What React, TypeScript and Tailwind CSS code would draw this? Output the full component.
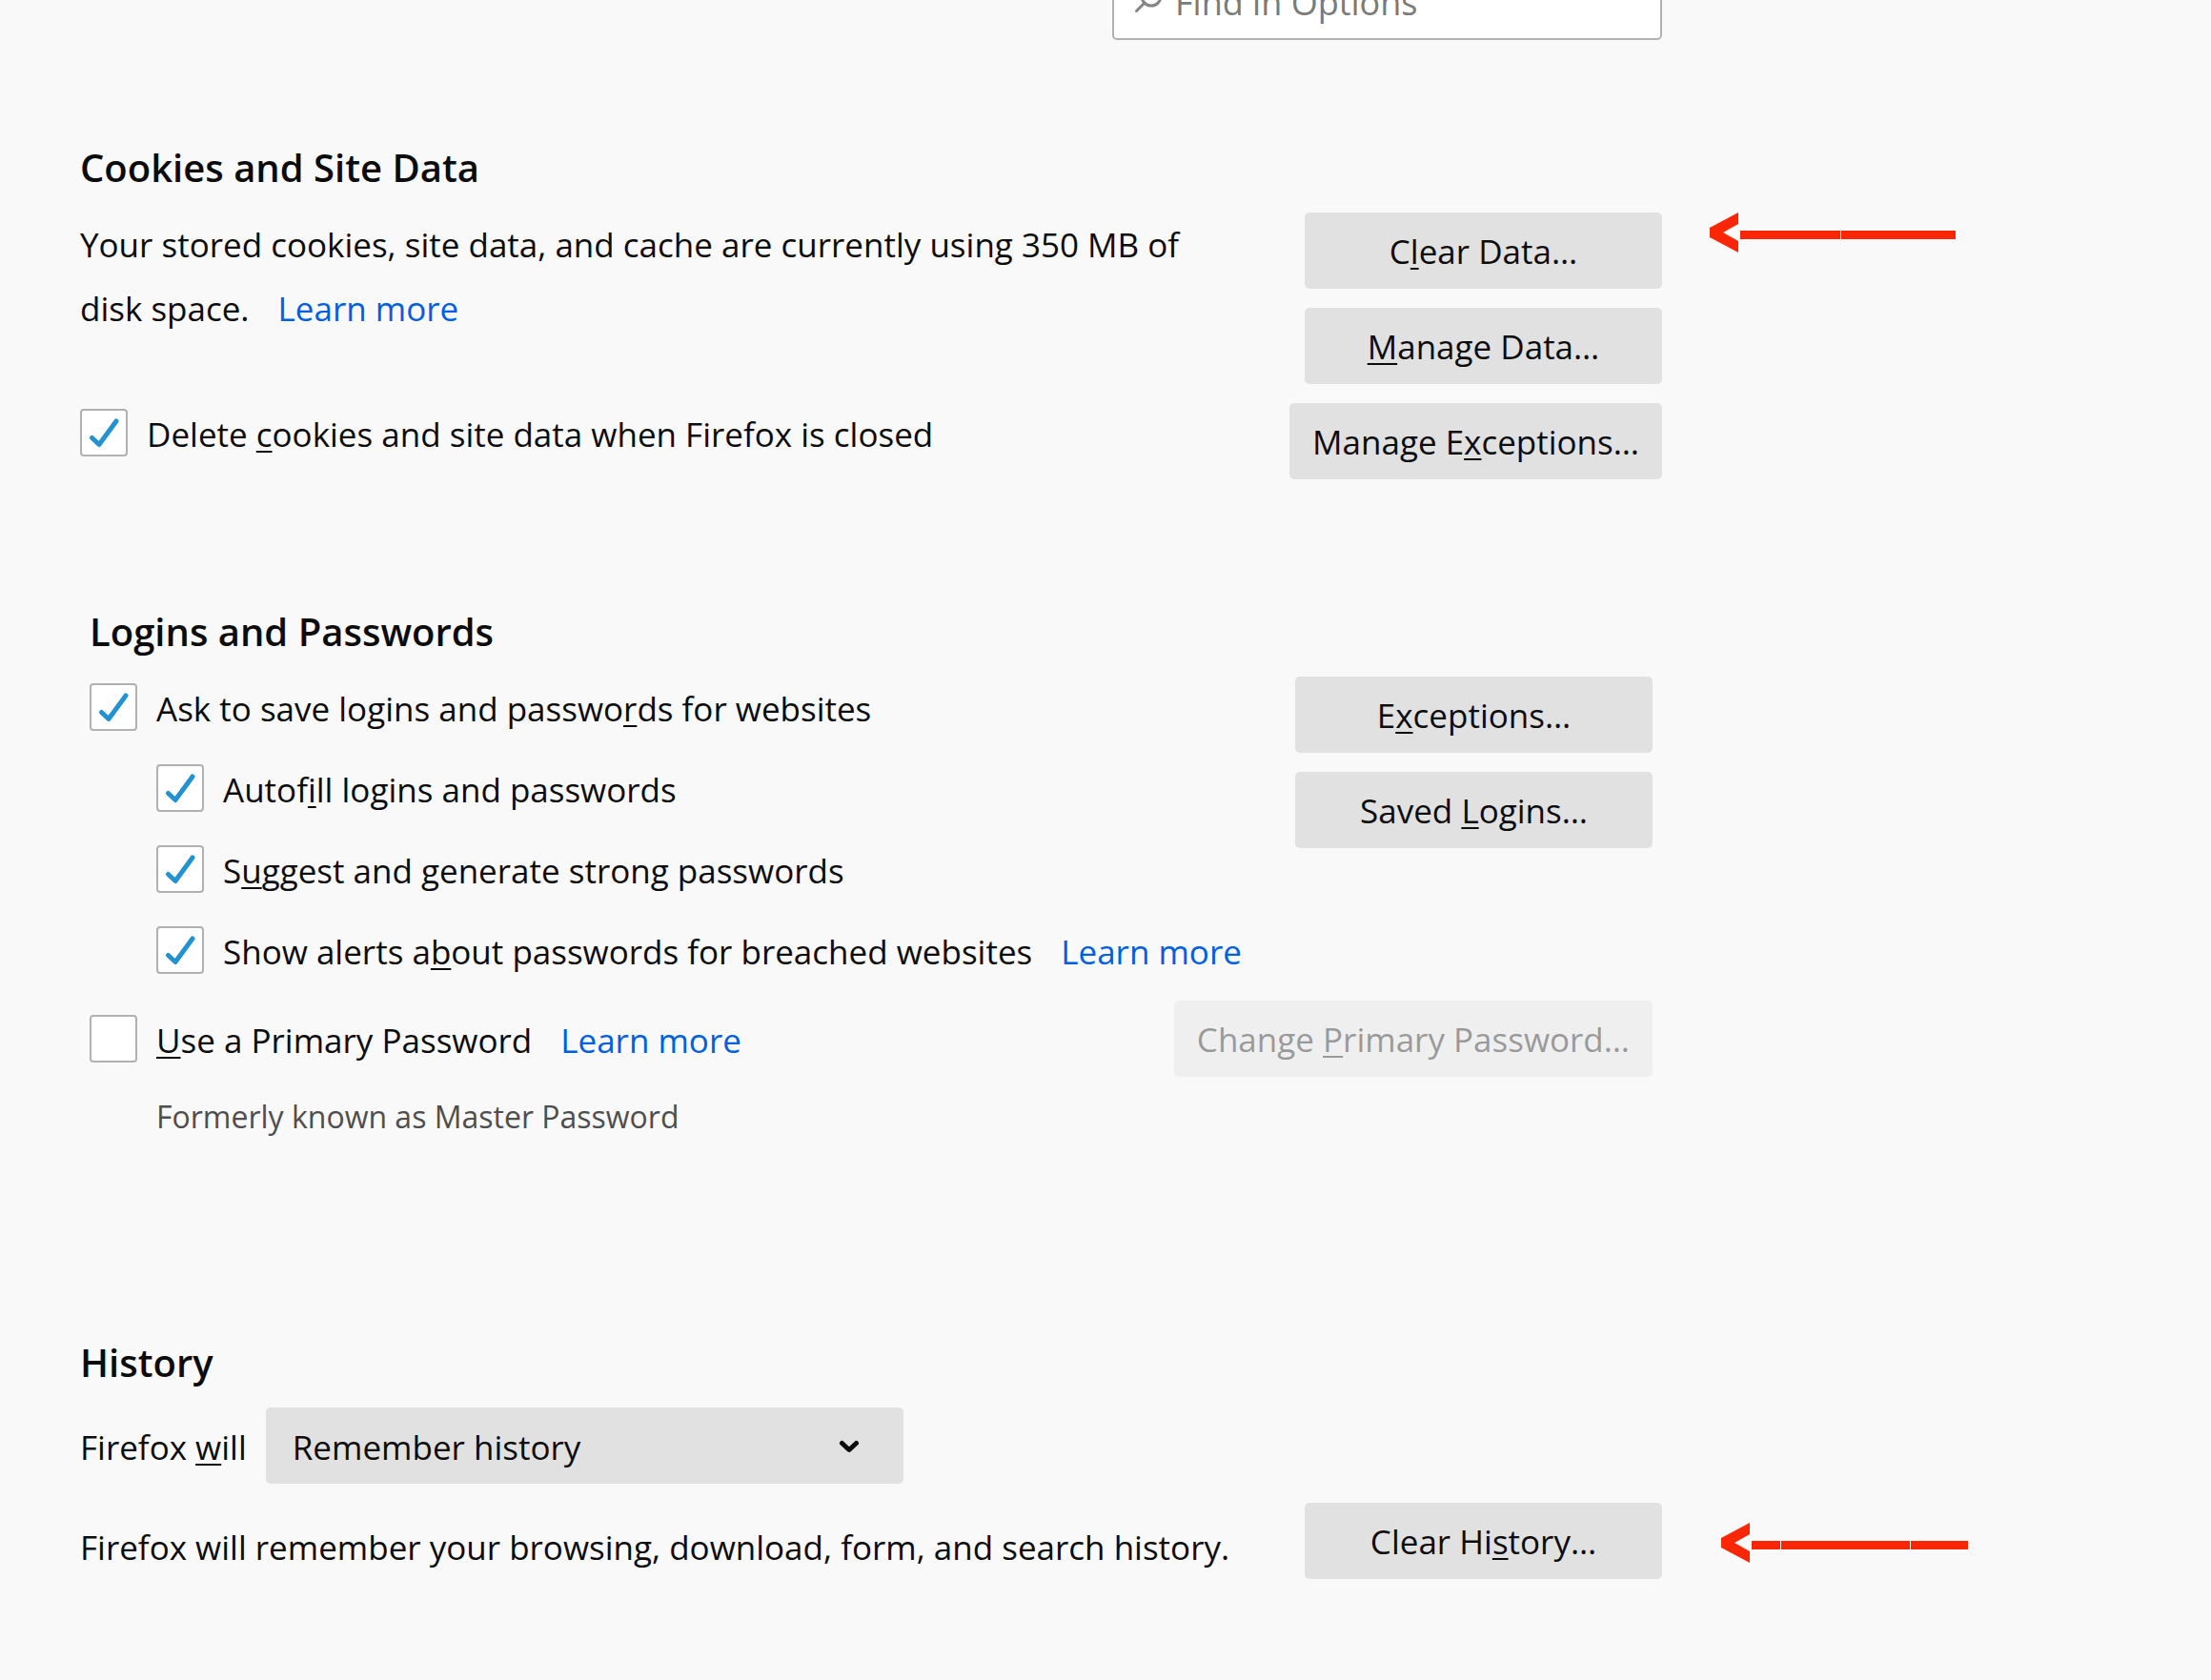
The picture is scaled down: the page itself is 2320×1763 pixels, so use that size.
import { useState, type ReactNode } from "react";
import clsx from "clsx";

interface CheckRowProps {
  id: string;
  defaultChecked?: boolean;
  children: ReactNode;
  learnMore?: boolean;
}

interface PrefButtonProps {
  children: ReactNode;
  disabled?: boolean;
}

// Underlined access key inside a label
function Key({ children }: { children: ReactNode }) {
  return <span className="underline decoration-2 underline-offset-4">{children}</span>;
}

function LearnMore() {
  return (
    <a href="#learn-more" className="ml-[30px] text-[#0060df]">
      Learn more
    </a>
  );
}

function CheckRow({ id, defaultChecked = false, children, learnMore }: CheckRowProps) {
  const [checked, setChecked] = useState(defaultChecked);

  return (
    <div className="flex items-center">
      <span className="relative mr-5 h-[50px] w-[50px] shrink-0">
        <input
          id={id}
          type="checkbox"
          checked={checked}
          onChange={(e) => setChecked(e.target.checked)}
          className="block h-full w-full appearance-none rounded-[4px] border-2 border-[#b1b1b1] bg-white"
        />
        {checked && (
          <svg viewBox="0 0 50 50" className="pointer-events-none absolute inset-0" aria-hidden="true">
            <path
              d="M12.5 30.5 L20 37.5 L38 13"
              fill="none"
              stroke="#2292d0"
              strokeWidth="5"
              strokeLinecap="round"
              strokeLinejoin="round"
            />
          </svg>
        )}
      </span>
      <div className="pt-1 leading-[46px]">
        <label htmlFor={id}>{children}</label>
        {learnMore && <LearnMore />}
      </div>
    </div>
  );
}

function PrefButton({ children, disabled }: PrefButtonProps) {
  return (
    <button
      type="button"
      disabled={disabled}
      className={clsx(
        "h-20 min-w-[375px] shrink-0 rounded-[5px] bg-[#e1e1e1] px-6 pt-0.5 whitespace-nowrap",
        disabled && "opacity-40"
      )}
    >
      {children}
    </button>
  );
}

function Heading({ children }: { children: ReactNode }) {
  return <h2 className="mb-[18px] text-[40px] leading-[58px] font-semibold">{children}</h2>;
}

// Hand-drawn style pointer, the shaft is made of dashes that nearly touch
function Arrow({ dashes }: { dashes: number[][] }) {
  return (
    <svg width="260" height="42" viewBox="0 0 260 42" fill="#fb2606" aria-hidden="true">
      <path d="M30 0 V12 L14 21 L30 30 V42 L0 26 V16 Z" />
      {dashes.map(([x, width]) => (
        <rect key={x} x={x} y="19" width={width} height="9" />
      ))}
    </svg>
  );
}

export default function App() {
  return (
    <main className="min-h-screen overflow-hidden bg-[#f9f9f9] px-[84px] pb-[106px] font-['Open_Sans','Noto_Sans',sans-serif] text-[35px] text-[#0c0c0d] [font-variant-ligatures:none]">
      <div className="w-full max-w-[1660px]">
        <header className="-mt-[38px] flex justify-end">
          <div className="relative w-[577px]">
            <svg
              width="30"
              height="30"
              viewBox="0 0 30 30"
              className="absolute top-[25px] left-[22px]"
              fill="none"
              stroke="#858585"
              strokeWidth="3"
              strokeLinecap="round"
              aria-hidden="true"
            >
              <circle cx="19" cy="9" r="10" />
              <path d="M12 16 L3.5 24.5" />
            </svg>
            <input
              type="search"
              aria-label="Find in Options"
              placeholder="Find in Options"
              className="block h-20 w-full rounded-[5px] border-2 border-[#b1b1b1] bg-white pr-4 pl-16 text-[36px] placeholder:text-[#7a7a7a]"
            />
          </div>
        </header>

        <section className="mt-[105px]">
          <Heading>Cookies and Site Data</Heading>
          <div className="flex justify-between">
            <div>
              <p className="mb-[72px] max-w-[1200px] leading-[67px]">
                Your stored cookies, site data, and cache are currently using 350 MB of disk space.
                <LearnMore />
              </p>
              <CheckRow id="delete-on-close" defaultChecked>
                Delete <Key>c</Key>ookies and site data when Firefox is closed
              </CheckRow>
            </div>
            <div className="flex flex-col items-end gap-5">
              <div className="relative flex">
                <PrefButton>
                  C<Key>l</Key>ear Data…
                </PrefButton>
                <div className="absolute top-0 left-full ml-[50px]">
                  <Arrow dashes={[[32, 105], [138, 120]]} />
                </div>
              </div>
              <PrefButton>
                <Key>M</Key>anage Data…
              </PrefButton>
              <PrefButton>
                Manage E<Key>x</Key>ceptions…
              </PrefButton>
            </div>
          </div>
        </section>

        <section className="mt-[131px] px-[10px] pb-[75px]">
          <Heading>Logins and Passwords</Heading>
          <div className="flex justify-between">
            <div className="flex flex-col gap-[35px] pt-[7px]">
              <CheckRow id="ask-save" defaultChecked>
                Ask to save logins and passwo<Key>r</Key>ds for websites
              </CheckRow>
              <div className="flex flex-col gap-[35px] pl-[70px]">
                <CheckRow id="autofill" defaultChecked>
                  Autof<Key>i</Key>ll logins and passwords
                </CheckRow>
                <CheckRow id="suggest" defaultChecked>
                  S<Key>u</Key>ggest and generate strong passwords
                </CheckRow>
                <CheckRow id="alerts" defaultChecked learnMore>
                  Show alerts a<Key>b</Key>out passwords for breached websites
                </CheckRow>
              </div>
            </div>
            <div className="flex flex-col items-end gap-5">
              <PrefButton>
                E<Key>x</Key>ceptions…
              </PrefButton>
              <PrefButton>
                Saved <Key>L</Key>ogins…
              </PrefButton>
            </div>
          </div>
          <div className="mt-7 flex items-center justify-between">
            <CheckRow id="primary-password" learnMore>
              <Key>U</Key>se a Primary Password
            </CheckRow>
            <PrefButton disabled>
              Change <Key>P</Key>rimary Password…
            </PrefButton>
          </div>
          <p className="mt-4 pl-[70px] text-[32px] leading-[52px] text-[#4e4e50]">
            Formerly known as Master Password
          </p>
        </section>

        <section className="mt-[128px]">
          <Heading>History</Heading>
          <div className="flex items-center gap-5">
            <label htmlFor="history-mode" className="pt-1">
              Firefox <Key>w</Key>ill
            </label>
            <div className="relative w-[669px]">
              <select
                id="history-mode"
                className="block h-20 w-full appearance-none rounded-[5px] bg-[#e1e1e1] px-7 pt-1"
              >
                <option>Remember history</option>
                <option>Never remember history</option>
                <option>Use custom settings for history</option>
              </select>
              <svg
                width="22"
                height="16"
                viewBox="0 0 22 16"
                className="pointer-events-none absolute top-8 right-[46px]"
                fill="none"
                stroke="#0c0c0d"
                strokeWidth="5"
                strokeLinecap="round"
                strokeLinejoin="round"
                aria-hidden="true"
              >
                <path d="M3.5 5.5 L11 12.5 L18.5 5.5" />
              </svg>
            </div>
          </div>
          <div className="mt-5 flex items-end justify-between">
            <p className="leading-[66px]">
              Firefox will remember your browsing, download, form, and search history.
            </p>
            <div className="relative flex">
              <PrefButton>
                Clear Hi<Key>s</Key>tory…
              </PrefButton>
              <div className="absolute top-[21px] left-full ml-[62px]">
                <Arrow dashes={[[32, 30], [63, 135], [199, 60]]} />
              </div>
            </div>
          </div>
        </section>
      </div>
    </main>
  );
}
